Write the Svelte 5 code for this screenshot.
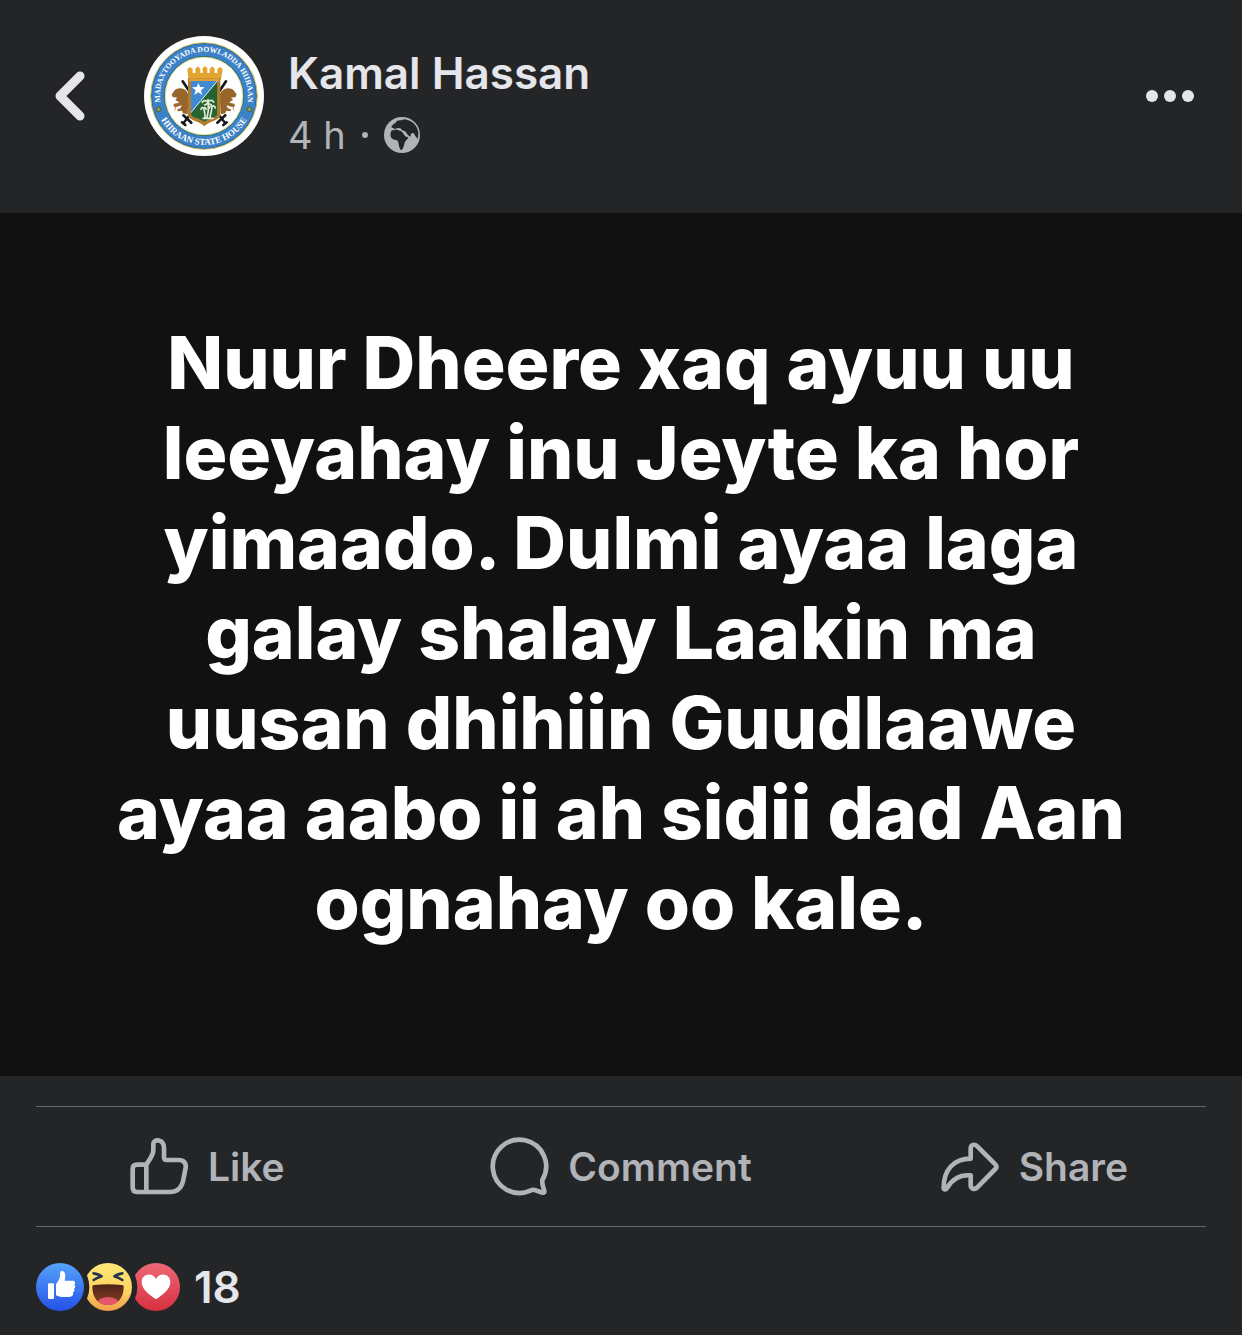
<script>
  const lines = [
    'Nuur Dheere xaq ayuu uu',
    'leeyahay inu Jeyte ka hor',
    'yimaado. Dulmi ayaa laga',
    'galay shalay Laakin ma',
    'uusan dhihiin Guudlaawe',
    'ayaa aabo ii ah sidii dad Aan',
    'ognahay oo kale.'
  ];
</script>

<article class="post">
  <header class="head">
    <button class="back" aria-label="Back">
      <svg width="32" height="50" viewBox="0 0 32 50" fill="none" stroke="currentColor" stroke-width="9" stroke-linecap="round" stroke-linejoin="round">
        <path d="M26 5 6 25l20 20" />
      </svg>
    </button>

    <svg class="avatar" viewBox="30 30 360 360" role="img" aria-label="Hiiraan State House seal">
      <defs>
        <path id="arc-top" d="M96 276A132 132 0 1 1 324 276" />
        <path id="arc-bottom" d="M63 210A147 147 0 0 0 357 210" />
        <clipPath id="shield"><path d="M171 165h79v98c0 12-26 12-39 24-14-12-40-12-40-24z" /></clipPath>
      </defs>
      <circle cx="210" cy="210" r="180" fill="#fff" />
      <circle cx="210" cy="210" r="138" fill="none" stroke="#3d82c8" stroke-width="40" />
      <circle cx="210" cy="210" r="160" fill="none" stroke="#d8c04a" stroke-width="3" />
      <circle cx="210" cy="210" r="157" fill="none" stroke="#2a6f9c" stroke-width="3" />
      <circle cx="210" cy="210" r="119" fill="none" stroke="#2f7466" stroke-width="3" />
      <circle cx="210" cy="210" r="116" fill="none" stroke="#d8cb72" stroke-width="2" />
      <g class="seal-text" text-anchor="middle">
        <text font-size="23"><textPath href="#arc-top" startOffset="50%">MADAXTOOYADA DOWLADDA HIIRAAN</textPath></text>
        <text font-size="27"><textPath href="#arc-bottom" startOffset="50%">HIIRAAN STATE HOUSE</textPath></text>
      </g>
      <g fill="#8c9a62" stroke="#41662f" stroke-width="3">
        <circle cx="74" cy="250" r="7" /><circle cx="346" cy="250" r="7" />
      </g>
      <g stroke="#15181c" fill="none" stroke-linecap="round">
        <path d="M146 166 166 196M276 166l-20 30" stroke-width="8" />
        <path d="M168 266l-20 26M254 266l20 26" stroke-width="7" />
        <path d="M148 268l24 22M274 268l-24 22M144 289l10 8M278 289l-10 8" stroke-width="8" />
      </g>
      <g fill="#98652c">
        <path d="M164 207c-4-10-12-20-25-20-10 0-18 4-21 12l-5 6 3 8 14 2-6 6 12 9-16 3-2 7 6 4 19-6-3 8-11 5 3 5 12-2 3 8 14 3z" />
        <path d="M257 207c4-10 12-20 25-20 10 0 18 4 21 12l5 6-3 8-14 2 6 6-12 9 16 3 2 7-6 4-19-6 3 8 11 5-3 5-12-2-3 8-14 3z" />
      </g>
      <path d="M127 237c-8 5 1 10-5 16M295 237c8 5-1 10 5 16" fill="none" stroke="#b78640" stroke-width="3" />
      <path d="M164 162l-4-33 8-6 8 6v12h8v-13l7-7 8 7v13h7v-14l7-7 7 7v14h7v-13l8-7 7 7v13h8v-12l8-6 8 6-5 33z" fill="#e3a52f" />
      <path d="M162 156h97v111c0 17-33 17-48 34-15-17-49-17-49-34z" fill="#b27c2a" />
      <path d="M165 157h91v10h-91z" fill="#dfa035" />
      <g clip-path="url(#shield)">
        <path d="M165 160h90v130h-90z" fill="#4289d4" />
        <path d="M254 160v130h-90v-22z" fill="#266332" />
        <path d="M254 160 164 268" stroke="#dbeaf2" stroke-width="3" />
      </g>
      <path d="m193 171 5 12 14 1-11 9 4 14-12-8-12 8 4-14-11-9 14-1z" fill="#fff" />
      <g fill="none" stroke="#dfead2" stroke-width="5" stroke-linecap="round">
        <path d="M222 229c2 17 0 36-4 47M209 246c3 12 5 20 4 29M234 243c-1 12-5 22-6 32M207 277h30" />
        <path d="M222 228c-7-6-13-5-17 1M222 228c7-7 13-6 17 0M222 228c-2 6-6 8-10 9M222 228c3 6 6 8 10 8M222 228v-7" />
        <path d="M209 246c-4-3-7-1-8 4M209 246c4-3 7 0 7 4M234 242c4-4 9-2 10 4M234 242c-4-3-8-1-8 5" />
      </g>
    </svg>

    <div class="who">
      <h1>Kamal Hassan</h1>
      <p class="meta">
        <span>4 h</span>
        <span class="dot"></span>
        <svg width="36" height="36" viewBox="0 0 108 108" role="img" aria-label="Public">
          <circle cx="54" cy="54" r="54" fill="#b0b3b8" />
          <path class="land" d="M22 31c1-6 7-10 13-14 2-6 10-8 16-7l10-3c20 2 36 15 41 34 2 9 1 18-1 25-3-5-8-9-12-17-3-2-6-1-8 2l-2 8c-7-3-10-8-13-13-4-5-9-5-13-7l-3-5-9-1-8 3z" />
          <path class="land" d="M22 42c4-4 12-4 19-4 3 3 9 2 12 6 5 3 7 9 10 13 3 3 6 3 10 3-1 7-8 10-11 16-1 7-3 16-8 22-4 3-6-1-8-7-2-8-2-13-5-20-7-3-14-2-19-8-4-7-3-15 0-21z" />
        </svg>
      </p>
    </div>

    <button class="more" aria-label="More options">
      <svg width="48" height="12" viewBox="0 0 48 12" fill="currentColor">
        <circle cx="6" cy="6" r="6" /><circle cx="24" cy="6" r="6" /><circle cx="42" cy="6" r="6" />
      </svg>
    </button>
  </header>

  <section class="body">
    <p>
      {#each lines as line}
        <span class="line">{line}</span>
      {/each}
    </p>
  </section>

  <footer>
    <div class="actions">
      <button class="action like">
        <svg width="58" height="58" viewBox="0 0 174 174">
          <path d="M49 80H21Q8 80 8 93v55q0 14 13 14h28zM49 80c6-12 21-26 21-44V18c0-16 32-16 32 12v28q0 8 8 8h36c15 0 23 9 21 23l-6 31c-4 28-19 42-41 42H49" />
        </svg>
        <span>Like</span>
      </button>
      <button class="action comment">
        <svg width="58" height="58" viewBox="0 0 174 174">
          <path d="M157 126c-2 10 3 22 6 33 1 4-1 6-5 5l-24-8c-5-2-9 0-13 2A80 80 0 1 1 157 126z" />
        </svg>
        <span>Comment</span>
      </button>
      <button class="action share">
        <svg width="58" height="58" viewBox="0 0 174 174">
          <path d="M8 149C8 96 38 62 89 62V32c0-13 12-15 20-7l54 54q7 7 0 14l-54 55c-8 8-20 5-20-7v-29c-36-3-56 12-71 38-3 6-10 5-10-1z" />
        </svg>
        <span>Share</span>
      </button>
    </div>

    <div class="reactions">
      <svg width="48" height="48" viewBox="0 0 144 144" role="img" aria-label="Like">
        <defs>
          <linearGradient id="blue" x2="0" y2="1"><stop stop-color="#55a4fb" /><stop offset="1" stop-color="#2550e8" /></linearGradient>
        </defs>
        <circle cx="72" cy="72" r="72" fill="url(#blue)" />
        <path d="M36 65q0-4 4-4h10q4 0 4 4v39q0 4-4 4H40q-4 0-4-4zM60 64c5-8 12-15 12-27 0-8 0-13 6-13 10 0 12 13 8 29h24c8 0 9 8 5 12 4 4 3 9-1 12 3 4 1 9-3 11 2 8-2 14-12 14H78c-8 0-12-3-18-5z" fill="#fff" />
      </svg>
      <svg width="48" height="48" viewBox="0 0 144 144" role="img" aria-label="Haha">
        <defs>
          <linearGradient id="gold" x2="0" y2="1"><stop stop-color="#ffe876" /><stop offset=".6" stop-color="#fcd362" /><stop offset="1" stop-color="#f09c4a" /></linearGradient>
          <linearGradient id="mouth" x2="0" y2="1"><stop stop-color="#4b2418" /><stop offset="1" stop-color="#8b3f1f" /></linearGradient>
          <clipPath id="mouth-clip"><path d="M25 70Q26 66 31 66q41-5 82 0 5 0 6 4c1 33-18 56-47 56S24 103 25 70z" /></clipPath>
        </defs>
        <circle cx="72" cy="72" r="72" fill="url(#gold)" />
        <g clip-path="url(#mouth-clip)">
          <path d="M20 60h104v70H20z" fill="url(#mouth)" />
          <ellipse cx="72" cy="121" rx="32" ry="19" fill="#e5566c" />
        </g>
        <path d="M29 31c9 1 17 4 24 9-9 3-17 6-24 11M115 31c-9 1-17 4-24 9 9 3 17 6 24 11" fill="none" stroke="#273550" stroke-width="8" stroke-linecap="round" stroke-linejoin="round" />
        <circle class="bite" cx="-72" cy="72" r="88" />
      </svg>
      <svg width="48" height="48" viewBox="0 0 144 144" role="img" aria-label="Love">
        <defs>
          <linearGradient id="red" x2="0" y2="1"><stop stop-color="#ee6877" /><stop offset="1" stop-color="#d6303f" /></linearGradient>
        </defs>
        <circle cx="72" cy="72" r="72" fill="url(#red)" />
        <path d="M72 109C50 94 29 78 29 57c0-24 32-31 43-9 11-22 43-15 43 9 0 21-21 37-43 52z" fill="#fff" />
        <circle class="bite" cx="-72" cy="72" r="88" />
      </svg>
      <span class="count">18</span>
    </div>
  </footer>
</article>

<style>
  :global(body) {
    margin: 0;
    background: #242527;
  }
  .post {
    font-family: Inter, 'Liberation Sans', sans-serif;
    color: #e4e6eb;
    background: #242527;
  }
  h1, p {
    margin: 0;
  }
  button {
    font: inherit;
    color: inherit;
    background: none;
    border: 0;
    padding: 0;
    cursor: pointer;
  }
  svg {
    display: block;
    flex: none;
  }
  .head {
    display: flex;
    align-items: center;
    padding: 36px 48px 57px 54px;
  }
  .avatar {
    width: 120px;
    height: 120px;
    margin: 0 24px 0 58px;
  }
  .seal-text {
    font-family: 'Liberation Serif', serif;
    font-weight: 700;
    fill: #fff;
  }
  .who {
    flex: 1;
    display: grid;
    gap: 16px;
    padding-top: 12px;
  }
  h1 {
    font-size: 44px;
    line-height: 50px;
    font-weight: 600;
  }
  .meta {
    display: flex;
    align-items: center;
    color: #b0b3b8;
    font-size: 38px;
    line-height: 42px;
  }
  .dot {
    width: 6px;
    height: 6px;
    border-radius: 50%;
    background: #b0b3b8;
    margin: 0 16px;
  }
  .land, .bite {
    fill: #242527;
  }
  .body {
    background: #111;
    color: #fff;
    padding: 105px 36px 128px;
    text-align: center;
    font-size: 73px;
    line-height: 90px;
    font-weight: 800;
  }
  .line {
    display: block;
  }
  footer {
    padding: 30px 36px 24px;
  }
  .actions {
    display: grid;
    grid-template-columns: 1fr auto 1fr;
    border: solid #656669;
    border-width: 1px 0;
    height: 119px;
    color: #b0b3b8;
  }
  .action {
    display: flex;
    align-items: center;
    gap: 20px;
    font-size: 39px;
    font-weight: 600;
  }
  .action svg {
    overflow: visible;
  }
  .action path {
    fill: none;
    stroke: currentColor;
    stroke-width: 14;
    stroke-linejoin: round;
  }
  .like {
    justify-self: start;
    padding-left: 94px;
  }
  .share {
    justify-self: end;
    padding-right: 78px;
  }
  .reactions {
    display: flex;
    align-items: center;
    padding-top: 36px;
  }
  .count {
    margin-left: 14px;
    font-size: 44px;
    line-height: 48px;
    font-weight: 600;
  }
</style>
